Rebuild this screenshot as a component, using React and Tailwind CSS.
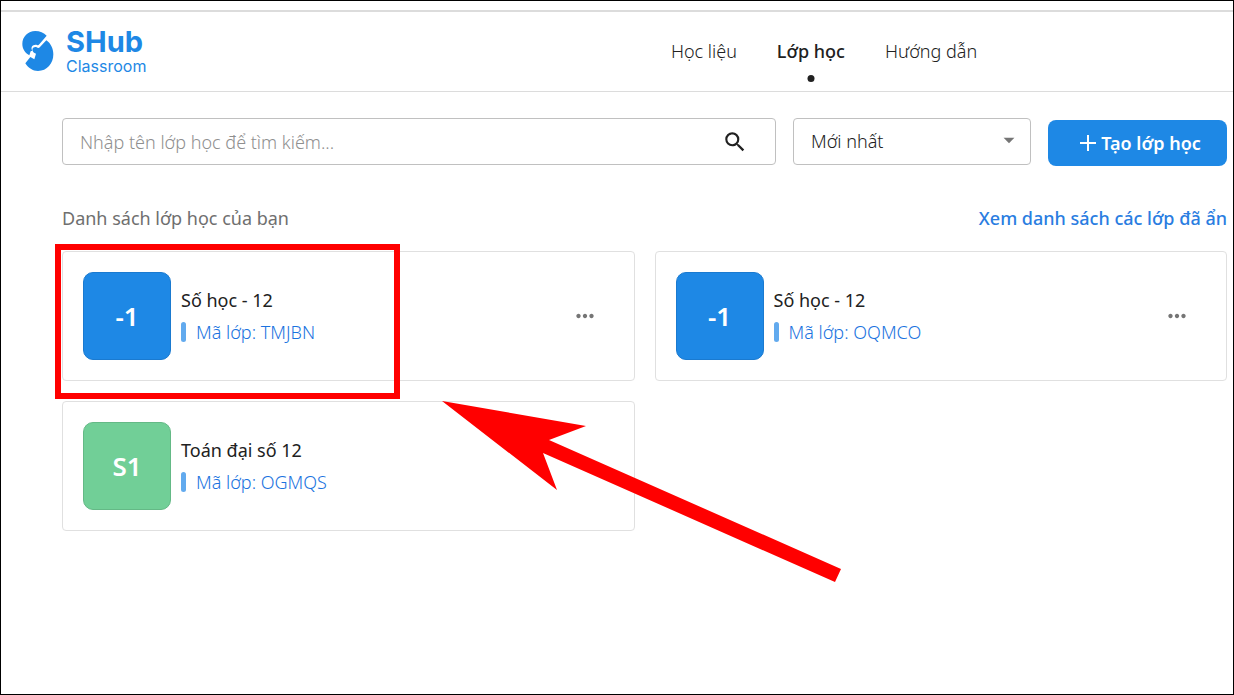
import { MdArrowDropDown, MdMoreHoriz, MdSearch } from "react-icons/md";

const classes = [
  { id: 1, initials: "-1", name: "Số học - 12", code: "TMJBN", tile: "bg-[#1e88e5] border-[#1a7ad0]", menu: true, marked: true },
  { id: 2, initials: "-1", name: "Số học - 12", code: "OQMCO", tile: "bg-[#1e88e5] border-[#1a7ad0]", menu: true },
  { id: 3, initials: "S1", name: "Toán đại số 12", code: "OGMQS", tile: "bg-[#71cf97] border-[#64b986]", pointer: true },
];

function Logo() {
  return (
    <a href="#home" className="flex items-center gap-3 pb-[2px] text-[#1e88e5]">
      <svg width="32" height="40" viewBox="65 93 96 120" aria-hidden="true">
        <path
          d="M139 107C131 98 118 93 105 93C83 93 66 110 66 132C66 146 74 159 87 166L91 154L96 152C89 142 98 132 110 135C113 136 114 136 117 133Z"
          fill="currentColor"
        />
        <path
          d="M138 121C151 130 159 145 159 163C159 191 140 213 113 213C97 213 84 204 75 190L90 171L102 178L107 161L101 158C91 149 99 138 109 142C113 145 116 144 119 141Z"
          fill="currentColor"
        />
      </svg>
      <span className="flex flex-col gap-[2px] font-['Inter',sans-serif]">
        <span className="text-[29px] leading-7 font-bold">SHub</span>
        <span className="text-base leading-4">Classroom</span>
      </span>
    </a>
  );
}

function RedArrow() {
  return (
    <svg
      className="pointer-events-none absolute -top-px left-[378px] z-10"
      width="400"
      height="182"
      viewBox="0 0 400 182"
      aria-hidden="true"
    >
      <path d="M1 0L145 25L108 39L400 168L394 181L102 52L116 89Z" fill="#f00" />
    </svg>
  );
}

function ClassCard({ item }) {
  return (
    <li className="relative flex h-[130px] items-center gap-[10px] rounded border border-[#e0e0e0] px-5">
      <div className={`flex size-[88px] shrink-0 items-center justify-center rounded-[10px] border text-[26px] font-semibold text-white ${item.tile}`}>
        {item.initials}
      </div>
      <div className="flex min-w-0 flex-1 flex-col gap-1">
        <h3 className="text-lg leading-7 text-[#212121]">{item.name}</h3>
        <p className="flex items-center gap-[10px] text-lg leading-7 font-light text-[#1a73e0]">
          <span className="h-5 w-[5px] rounded-sm bg-[#62aaee]" />
          Mã lớp: {item.code}
        </p>
      </div>
      {item.menu && (
        <button type="button" aria-label="Tùy chọn" className="mr-4 text-[#757575]">
          <MdMoreHoriz size={26} />
        </button>
      )}
      {item.marked && (
        <div className="pointer-events-none absolute -top-2 -left-2 z-10 h-[155px] w-[345px] border-[6px] border-[#f00]" />
      )}
      {item.pointer && <RedArrow />}
    </li>
  );
}

export default function App() {
  return (
    <div className="flex min-h-screen flex-col overflow-hidden border border-black bg-white font-['Noto_Sans',sans-serif] text-[#212121]">
      <div className="h-[11px] border-b-2 border-[#dcdcdc]" />
      <header className="flex h-20 items-center border-b border-[#dcdcdc] pl-[21px]">
        <Logo />
        <div className="flex-[41]" />
        <nav className="flex gap-10 pb-[2px] text-lg leading-7 font-light whitespace-nowrap">
          <a href="#hoc-lieu">Học liệu</a>
          <a href="#lop-hoc" aria-current="page" className="relative font-medium">
            Lớp học
            <span className="absolute top-[38px] left-1/2 size-[7px] -translate-x-1/2 rounded-full bg-[#212121]" />
          </a>
          <a href="#huong-dan">Hướng dẫn</a>
        </nav>
        <div className="flex-[20]" />
      </header>

      <main className="pt-[26px] pr-[6px] pl-[61px]">
        <form className="flex h-12 gap-[17px] text-lg">
          <div className="flex h-[47px] flex-1 items-center rounded border border-[#c0c0c0] pr-[27px] pl-[17px]">
            <input
              type="text"
              aria-label="Tìm kiếm lớp học"
              placeholder="Nhập tên lớp học để tìm kiếm..."
              className="min-w-0 flex-1 font-light outline-none placeholder:text-[#8f8f8f]"
            />
            <button type="button" aria-label="Tìm kiếm">
              <MdSearch size={26} />
            </button>
          </div>
          <div className="relative h-[47px] w-[238px]">
            <select
              aria-label="Sắp xếp"
              className="size-full appearance-none rounded border border-[#c0c0c0] bg-white pb-[2px] pl-[17px] font-light"
            >
              <option>Mới nhất</option>
            </select>
            <MdArrowDropDown size={26} className="pointer-events-none absolute top-[9px] right-[9px] text-[#757575]" />
          </div>
          <button
            type="button"
            className="flex h-[46px] w-[179px] items-center justify-center gap-1 self-end rounded-lg bg-[#1e88e5] pl-[5px] font-semibold text-white"
          >
            <svg width="18" height="18" viewBox="0 0 18 18" aria-hidden="true">
              <path d="M9 1V17M1 9H17" stroke="currentColor" strokeWidth="2" />
            </svg>
            Tạo lớp học
          </button>
        </form>

        <div className="mt-[38px] flex items-center justify-between text-lg leading-7">
          <h2 className="text-[#6f6f6f]">Danh sách lớp học của bạn</h2>
          <a href="#lop-da-an" className="font-medium text-[#2a7de1]">Xem danh sách các lớp đã ẩn</a>
        </div>

        <ul className="mt-[19px] grid grid-cols-2 gap-5">
          {classes.map((item) => (
            <ClassCard key={item.id} item={item} />
          ))}
        </ul>
      </main>
    </div>
  );
}
